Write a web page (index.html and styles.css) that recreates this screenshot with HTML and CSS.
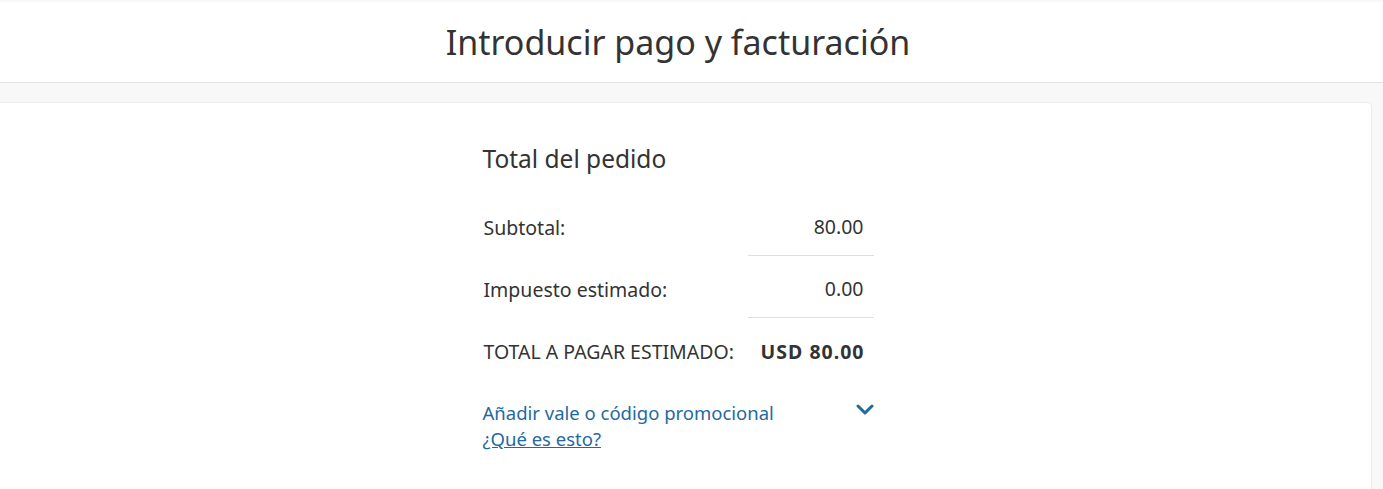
FILE: index.html
```html
<!DOCTYPE html>
<html lang="es">
<head>
    <meta charset="UTF-8">
    <meta name="viewport" content="width=device-width, initial-scale=1.0">
    <title>Introducir pago y facturación</title>
    <link rel="stylesheet" href="styles.css">
</head>
<body>

    <header class="page-header">
        <h1>Introducir pago y facturación</h1>
    </header>

    <main class="checkout">
        <section class="card">
            <div class="summary">
                <h2>Total del pedido</h2>

                <div class="row">
                    <span class="label">Subtotal:</span>
                    <span class="value lined">80.00</span>
                </div>
                <div class="row">
                    <span class="label">Impuesto estimado:</span>
                    <span class="value lined">0.00</span>
                </div>
                <div class="row">
                    <span class="label">TOTAL A PAGAR ESTIMADO:</span>
                    <span class="value total">USD 80.00</span>
                </div>

                <div class="promo">
                    <div class="promo-text">
                        <a href="#" class="promo-toggle">Añadir vale o código promocional</a>
                        <a href="#" class="help">¿Qué es esto?</a>
                    </div>
                    <svg class="chevron" width="18" height="11" viewBox="0 0 18 11">
                        <path d="M2 2 L9 9 L16 2" fill="none" stroke="#1f6a9e" stroke-width="3" stroke-linecap="round" stroke-linejoin="round"/>
                    </svg>
                </div>
            </div>
        </section>
    </main>

</body>
</html>
```

FILE: styles.css
```css
body {
    margin: 0;
    font-family: "Noto Sans", "Open Sans", Arial, sans-serif;
    color: #333;
    background: #f8f8f8;
    overflow: hidden;
}
.page-header {
    margin-top: 2px;
    background: #fff;
    border-bottom: 1px solid #e2e2e2;
    height: 80px;
    display: flex;
    align-items: center;
    justify-content: center;
    padding-right: 27px;
}
.page-header h1 {
    margin: 0;
    font-size: 34px;
    font-weight: 400;
    color: #333;
}
.checkout {
    padding-top: 19px;
}
.card {
    background: #fff;
    margin: 0 11px 0 -16px;
    border: 1px solid #ececec;
    border-radius: 5px;
    height: 390px;
    display: flex;
    justify-content: center;
}
.summary {
    width: 391px;
    padding-top: 39px;
}
.summary h2 {
    margin: 0 0 19px 0;
    font-size: 24.5px;
    font-weight: 400;
}
.row {
    display: flex;
    justify-content: space-between;
    height: 62px;
    font-size: 19.5px;
}
.label, .value {
    box-sizing: border-box;
    height: 62px;
    padding-top: 4px;
    display: flex;
    align-items: center;
}
.label {
    padding-left: 1px;
}
.value {
    width: 126px;
    padding-right: 10px;
    justify-content: flex-end;
}
.lined {
    border-bottom: 1px solid #dedede;
}
.total {
    font-weight: 700;
    letter-spacing: 1px;
    padding-right: 9px;
}
.promo {
    display: flex;
    justify-content: space-between;
    margin-top: 20px;
    font-size: 18.5px;
}
.promo-text {
    display: flex;
    flex-direction: column;
}
.promo-text a {
    color: #1f6a9e;
    text-decoration: none;
    line-height: 26px;
}
.promo-text .help {
    text-decoration: underline;
}
.chevron {
    margin-top: 4px;
}
```
